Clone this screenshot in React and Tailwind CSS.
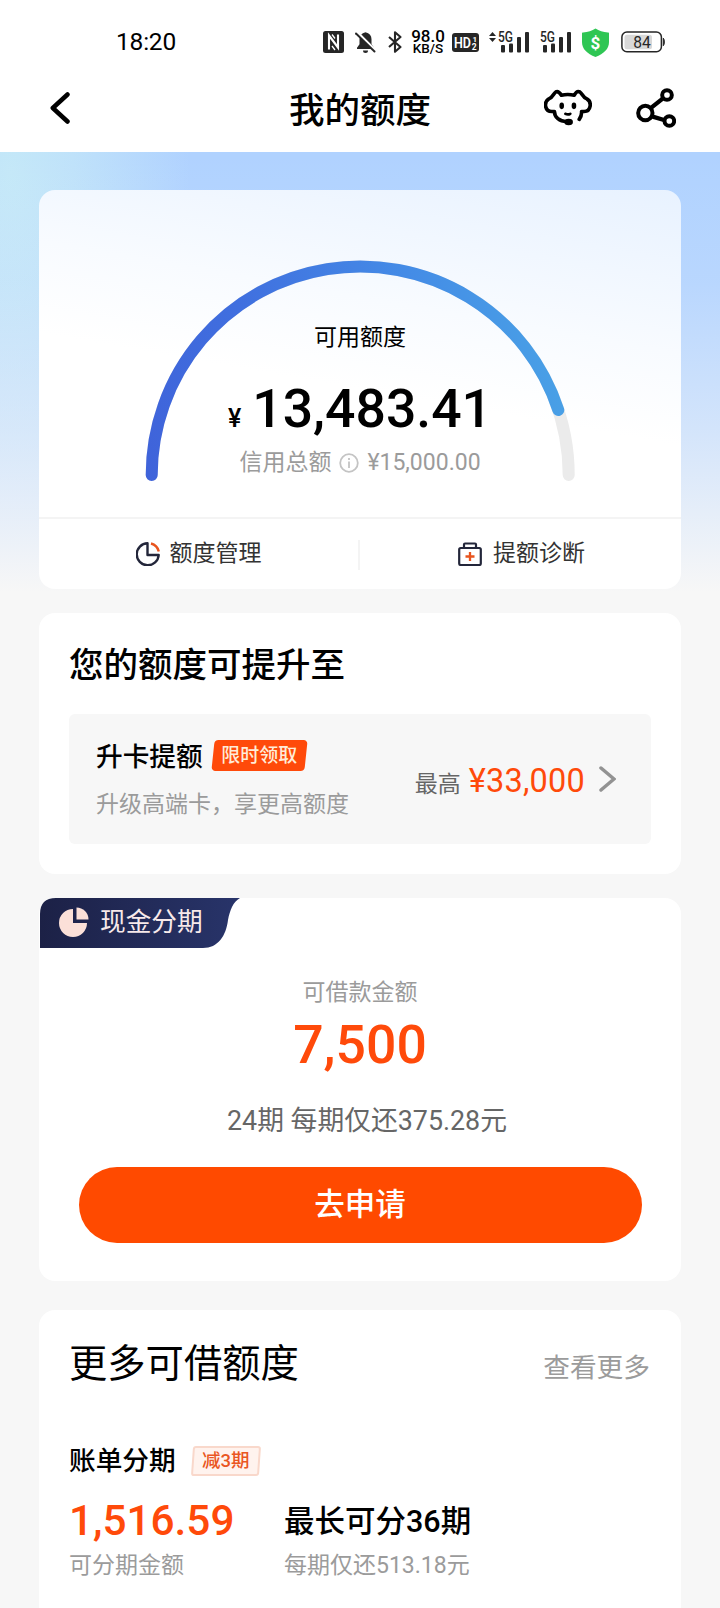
const StatusBar = () => {
  return (
    <div className="flex h-[66px] items-center pt-[18px] pl-[116px] text-[#262626]">
      <span className="w-[207px] text-[24.500px] leading-none tracking-[-0.200px] text-black">18:20</span>

      {/* nfc */}
      <svg className="h-[22px] w-[21px]" viewBox="0 0 21 22">
        <rect width="21" height="22" rx="2.500" fill="#262626" />
        <path d="M6 18.500V4.500l9 12V3.500" fill="none" stroke="#fff" strokeWidth="2.100" />
        <path d="M9 3.500l3 4M9 15l3 4" stroke="#fff" strokeWidth="1.300" />
      </svg>

      {/* muted bell */}
      <svg className="ml-[11px] h-[22px] w-[21px]" viewBox="0 0 21 22">
        <path d="M10.500 1.200c-4 1-6 3.500-6 7v5l-2.500 3.500v1.300h17v-1.300l-2.500-3.500v-5c0-3.500-2-6-6-7z" fill="#262626" />
        <path d="M8 19.500h5a2.500 2.500 0 0 1-5 0z" fill="#262626" />
        <path d="M2.500 1.500l18 18" stroke="#fff" strokeWidth="2.500" />
        <path d="M1 2.500l18.500 18" stroke="#262626" strokeWidth="1.900" strokeLinecap="round" />
      </svg>

      {/* bluetooth */}
      <svg className="ml-3 h-[22px] w-[14px]" viewBox="0 0 14 22">
        <path d="M1 6l11.500 10L7 20.800V1.200L12.500 6 1 16" fill="none" stroke="#262626" strokeWidth="2.100" strokeLinejoin="round" />
      </svg>

      <div className="ml-[8px] flex w-[36px] flex-col items-center font-medium text-black">
        <span className="text-[17px] leading-[12px]">98.0</span>
        <span className="text-[13.500px] leading-[12px]">KB/S</span>
      </div>

      {/* hd voice */}
      <svg className="ml-[6px] h-[19px] w-[27px]" viewBox="0 0 27 19">
        <rect width="27" height="19" rx="3" fill="#262626" />
        <text x="2" y="14.800" fill="#fff" fontSize="15" fontWeight="600" textLength="17" lengthAdjust="spacingAndGlyphs">HD</text>
        <text x="20.500" y="8.500" fill="#fff" fontSize="8" fontWeight="700">1</text>
        <text x="19.800" y="17" fill="#fff" fontSize="8.500" fontWeight="700">2</text>
      </svg>

      <Signal className="ml-[10px]" arrows />
      <Signal className="ml-[11px]" />

      {/* security shield */}
      <svg className="ml-[11px] h-[29px] w-[27px]" viewBox="0 0 27 29">
        <path d="M13.500 0.500c3.500 2.500 7.500 3.500 12.500 4 .8 0 1 .4 1 1V14c0 7-5 11.500-13.500 15C5 25.500 0 21 0 14V5.500c0-.6.2-1 1-1 5-.5 9-1.500 12.500-4z" fill="#2fc654" />
        <text x="13.500" y="20.500" textAnchor="middle" fill="#fff" fontSize="17" fontWeight="700">$</text>
      </svg>

      {/* battery */}
      <svg className="ml-[12px] h-[22px] w-[44px]" viewBox="0 0 44 22">
        <rect x="0.900" y="1" width="39.500" height="19.800" rx="5" fill="none" stroke="#262626" strokeWidth="1.500" />
        <rect x="3.500" y="3.700" width="27.500" height="14.500" rx="2.500" fill="#d8d8d8" />
        <path d="M42.300 7.200c1.400 1 1.400 6.500 0 7.500z" fill="#262626" stroke="#262626" />
        <text x="21" y="16.500" textAnchor="middle" fill="#262626" fontSize="16" textLength="17.500" lengthAdjust="spacingAndGlyphs">84</text>
      </svg>
    </div>
  );
};

const Signal = ({ className, arrows }) => {
  return (
    <div className={`flex items-start ${className}`}>
      {arrows && (
        <svg className="mt-[1px] mr-[2px] h-[10px] w-[7px]" viewBox="0 0 7 10">
          <path d="M0 4l3.500-4L7 4zM0 6h7l-3.500 4z" fill="#262626" />
        </svg>
      )}
      <svg className="h-[22px] w-[31px] overflow-visible" viewBox="0 0 31 22">
        <rect x="3" y="14" width="4" height="7.500" rx="1" fill="#262626" />
        <rect x="11" y="12.500" width="4" height="9" rx="1" fill="#262626" />
        <rect x="19" y="6" width="4" height="15.500" rx="1" fill="#262626" />
        <rect x="27" y="1" width="4" height="20.500" rx="1" fill="#262626" />
        <text x="0" y="10.500" fill="#262626" fontSize="14" fontWeight="500" textLength="15" lengthAdjust="spacingAndGlyphs">5G</text>
      </svg>
    </div>
  );
};

const NavBar = () => {
  return (
    <header className="grid h-[86px] grid-cols-[1fr_auto_1fr] items-center">
      <svg className="mb-[2px] ml-[50px] h-8 w-5" viewBox="0 0 20 32" fill="none" stroke="#000" strokeWidth="4.500" strokeLinecap="round" strokeLinejoin="round">
        <path d="M17.500 2.500L2.800 16l14.700 13.500" />
      </svg>
      <h1 className="pt-[5px] text-[35.500px] leading-none font-medium">我的额度</h1>
      <div className="mr-[44px] flex items-center justify-end gap-[44px] pb-[2px]">
        <svg className="mb-[1px] h-[37px] w-12" viewBox="72 58 144 112" fill="none" stroke="#000" strokeWidth="11" strokeLinecap="round" strokeLinejoin="round">
          <path d="M140 157C118 156 103 144 103 126H95C73 126 70 97 86 88C99 83 100 71 107 67C115 63 119 69 124 77Q143 72 163 77C167 69 172 63 180 67C187 71 188 83 201 88C217 97 214 126 193 126H185C186 136 183 143 178 150" />
          <ellipse cx="125" cy="109" rx="7" ry="10" fill="#000" stroke="none" />
          <ellipse cx="162" cy="109" rx="7" ry="10" fill="#000" stroke="none" />
          <path d="M136 133q8 4 15 0" strokeWidth="8" />
          <ellipse cx="146" cy="158" rx="13" ry="10" fill="#000" stroke="none" />
        </svg>
        <svg className="h-10 w-10" viewBox="348 54 120 120" fill="none" stroke="#000" strokeWidth="12">
          <circle cx="376" cy="129" r="21.500" />
          <circle cx="441" cy="75" r="14.500" />
          <circle cx="448" cy="153" r="14.500" />
          <path d="M394 113L428 86M398 140L432 150" strokeWidth="13" />
        </svg>
      </div>
    </header>
  );
};

const Gauge = () => {
  return (
    <svg className="h-[228px] w-[430px]" viewBox="145 256 430 228" fill="none" strokeWidth="12" strokeLinecap="round">
      <defs>
        <linearGradient id="gauge" x1="146" y1="474" x2="560" y2="380" gradientUnits="userSpaceOnUse">
          <stop offset="0" stopColor="#3f63da" />
          <stop offset="0.300" stopColor="#406fdf" />
          <stop offset="0.700" stopColor="#448be6" />
          <stop offset="1" stopColor="#49a0e6" />
        </linearGradient>
      </defs>
      <path d="M151.700 474A208.500 208.500 0 0 1 568.700 474" stroke="#ebebeb" />
      <path d="M151.700 474A208.500 208.500 0 0 1 558.300 409" stroke="url(#gauge)" />
    </svg>
  );
};

const QuotaCard = () => {
  return (
    <section className="flex h-[399px] flex-col rounded-2xl bg-[linear-gradient(190deg,#e8f2ff_0%,#f8fbff_32%,#ffffff_50%)]">
      <div className="grid h-[329px] justify-center border-b-2 border-[#f4f4f4] pt-[67px]">
        <div className="col-start-1 row-start-1">
          <Gauge />
        </div>
        <div className="col-start-1 row-start-1 flex flex-col items-center pt-[65px]">
          <p className="text-[23px] leading-8">可用额度</p>
          <p className="mt-[27px] flex items-baseline gap-[11px] leading-[56px] font-medium">
            <span className="text-[25px]">¥</span>
            <span className="text-[53.500px]">13,483.41</span>
          </p>
          <p className="flex items-center text-[23px] leading-8 text-[#9b9b9b]">
            信用总额
            <svg className="mx-2 h-5 w-5" viewBox="0 0 20 20" fill="none" stroke="#c4c4c4" strokeWidth="1.800">
              <circle cx="10" cy="10" r="8.800" />
              <path d="M10 8.500v6.500M10 5v2" />
            </svg>
            ¥15,000.00
          </p>
        </div>
      </div>
      <div className="flex h-[70px] items-center pt-[1px] text-[23px] text-[#333]">
        <a className="flex flex-1 items-center justify-center gap-[10px]">
          <svg className="mb-[2px] h-6 w-6" viewBox="0 0 24 24" fill="none" stroke="#23263a" strokeWidth="2.400" strokeLinejoin="round">
            <path d="M11.500 1.300V13h11.200A11 11 0 1 1 11.500 1.300z" />
            <path d="M15 1.500a11 11 0 0 1 7.800 8" stroke="#e8541e" />
          </svg>
          额度管理
        </a>
        <span className="h-[30px] w-[2px] bg-[#f4f4f4]" />
        <a className="flex flex-1 items-center justify-center gap-[11px] pl-[2px]">
          <svg className="mb-[2px] h-6 w-6" viewBox="0 0 24 24" fill="none" stroke="#23263a" strokeWidth="2.200" strokeLinejoin="round">
            <rect x="1.200" y="6" width="21.600" height="17" rx="1.500" />
            <path d="M6 6V2.500a1 1 0 0 1 1-1h10a1 1 0 0 1 1 1V6" />
            <path d="M12 10v9M7.500 14.500h9" stroke="#e8541e" strokeWidth="2.300" />
          </svg>
          提额诊断
        </a>
      </div>
    </section>
  );
};

const UpgradeCard = () => {
  return (
    <section className="mt-6 h-[261px] rounded-2xl bg-white px-[30px] pt-[31px]">
      <h2 className="text-[34.500px] leading-[42px] font-medium">您的额度可提升至</h2>
      <div className="mt-[28px] flex h-[130px] items-center justify-between rounded-md bg-[#f7f7f7] pr-[35px] pl-[27px]">
        <div className="pt-[4px]">
          <div className="flex items-center gap-[9px]">
            <span className="text-[26.700px] leading-9 font-medium">升卡提额</span>
            <span className="relative mb-[3px] flex h-[31px] w-[95px] items-center justify-center text-[19px] leading-none font-medium text-[#ffecd8]">
              <span className="absolute inset-x-[1px] inset-y-0 -skew-x-6 rounded bg-[#ff4a0a]" />
              <span className="relative">限时领取</span>
            </span>
          </div>
          <p className="mt-[12px] text-[23px] leading-9 text-[#9b9b9b]">升级高端卡，享更高额度</p>
        </div>
        <div className="flex items-center">
          <span className="pt-[12px] text-[23px] text-[#666]">最高</span>
          <span className="ml-[8px] pt-[5px] text-[32.500px] leading-none tracking-[0.200px] text-[#ff4a0a]">¥33,000</span>
          <svg className="ml-[14px] h-[26px] w-[17px]" viewBox="0 0 17 26" fill="none" stroke="#929292" strokeWidth="3.500" strokeLinecap="round">
            <path d="M2 2l13 11L2 24" />
          </svg>
        </div>
      </div>
    </section>
  );
};

const CashCard = () => {
  return (
    <section className="mt-6 flex h-[383px] flex-col items-center rounded-2xl bg-white">
      <div className="grid h-[50px] w-[202px] self-start">
        <svg className="col-start-1 row-start-1 h-[50px] w-[202px]" viewBox="0 0 202 50">
          <defs>
            <linearGradient id="tab">
              <stop offset="0" stopColor="#1c2146" />
              <stop offset="1" stopColor="#28346a" />
            </linearGradient>
          </defs>
          <path d="M1 50V16Q1 0 17 0H201C194 4 191 12 189 22C187 38 179 50 164 50z" fill="url(#tab)" />
        </svg>
        <div className="col-start-1 row-start-1 flex items-center gap-[11px] pl-5 text-[25.700px] leading-none text-[#f7e9ea]">
          <svg className="mb-[2px] h-[30px] w-[30px]" viewBox="0 0 30 30" fill="#fbe0d8">
            <path d="M14 2A14 14 0 1 0 28 16H14z" />
            <path d="M17.500 0.500A12 12 0 0 1 29.500 12.500h-12z" />
          </svg>
          <span>现金分期</span>
        </div>
      </div>
      <p className="mt-[29px] text-[23px] leading-8 text-[#9b9b9b]">可借款金额</p>
      <p className="mt-[8px] text-[53.500px] leading-[56px] font-medium text-[#ff4a0a]">7,500</p>
      <p className="mt-[30px] ml-[14px] text-[26.800px] leading-9 text-[#666]">24期 每期仅还375.28元</p>
      <button className="mt-[28px] h-[76px] w-[563px] rounded-full bg-[#ff4a00] text-[30.500px] font-medium text-white">去申请</button>
    </section>
  );
};

const MoreCard = () => {
  return (
    <section className="mt-[29px] h-[310px] rounded-t-2xl bg-white px-[30px] pt-[29px]">
      <div className="flex items-center justify-between">
        <h2 className="text-[38.300px] leading-[50px]">更多可借额度</h2>
        <a className="pt-2 pr-[1px] text-[26.700px] leading-9 text-[#9b9b9b]">查看更多</a>
      </div>
      <div className="mt-[54px] flex items-center gap-[15px]">
        <span className="text-[26.700px] leading-9 font-medium">账单分期</span>
        <span className="relative flex h-[30px] w-[70px] items-center justify-center text-[18.500px] leading-none font-medium text-[#ea5622]">
          <span className="absolute inset-x-[1px] inset-y-0 -skew-x-4 rounded-[3px] border-2 border-[#f9d8cb] bg-[#fff3ee]" />
          <span className="relative">减3期</span>
        </span>
      </div>
      <div className="mt-[16px] flex">
        <div className="w-[215px]">
          <p className="text-[42.300px] leading-[52px] font-medium text-[#ff4a0a]">1,516.59</p>
          <p className="mt-[3px] text-[23px] leading-8 text-[#9b9b9b]">可分期金额</p>
        </div>
        <div>
          <p className="pt-[1px] text-[30.500px] leading-[51px] font-medium">最长可分36期</p>
          <p className="mt-[3px] text-[23px] leading-8 text-[#9b9b9b]">每期仅还513.18元</p>
        </div>
      </div>
    </section>
  );
};

export default function App() {
  return (
    <div className="h-[1608px] w-[720px] overflow-hidden bg-[#f7f7f7] font-['Roboto','Noto_Sans_CJK_SC',sans-serif] text-black">
      <div className="bg-white">
        <StatusBar />
        <NavBar />
      </div>
      <main className="bg-[linear-gradient(to_bottom,rgba(247,247,247,0)_0px,rgba(247,247,247,0.120)_130px,rgba(247,247,247,0.500)_280px,#f7f7f7_440px),radial-gradient(180px_360px_at_10px_20px,#c4e8f8_0%,#bfe2fa_35%,#b0d2ff_100%)] px-[39px] pt-[38px]">
        <QuotaCard />
        <UpgradeCard />
        <CashCard />
        <MoreCard />
      </main>
    </div>
  );
}
